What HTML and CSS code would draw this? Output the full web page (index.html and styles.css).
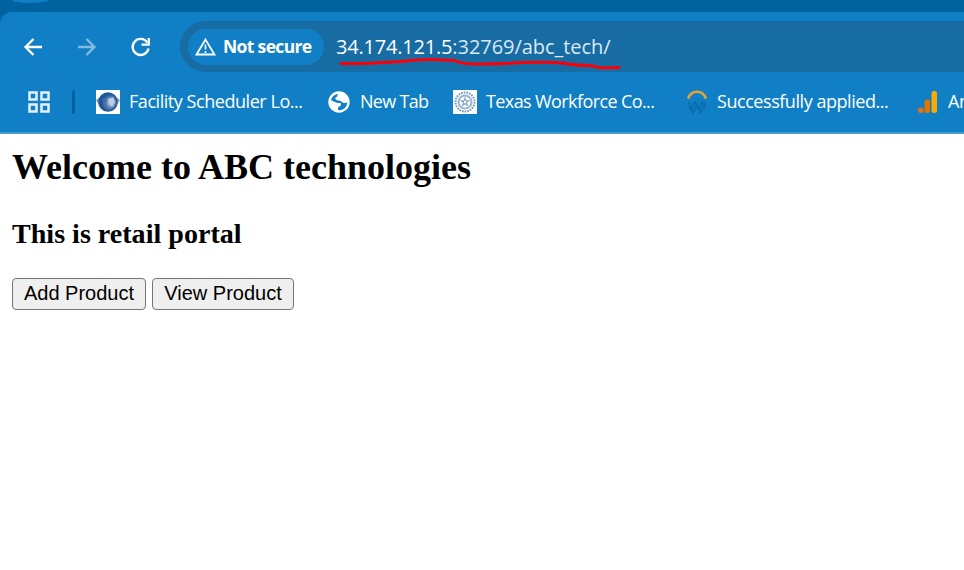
FILE: index.html
```html
<!DOCTYPE html>
<html lang="en">
<head>
<meta charset="utf-8">
<title>ABC technologies</title>
<link rel="stylesheet" href="styles.css">
</head>
<body>
<header class="browser">
  <div class="tabstrip"><span class="tab-foot"></span></div>
  <div class="chrome">
    <div class="toolbar">
      <svg class="nav back" width="24" height="24" viewBox="0 0 24 24"><path d="M21 12H5M12.500 4L4.500 12L12.500 20"/></svg>
      <svg class="nav forward" width="24" height="24" viewBox="0 0 24 24"><path d="M3 12H19.500M11.500 4L19.500 12L11.500 20"/></svg>
      <svg class="nav reload" width="24" height="24" viewBox="0 0 24 24"><path d="M18.300 7.500A8 8 0 1 0 19.500 13.500"/><path d="M19.800 3V9.600H12.500"/></svg>
      <div class="address">
        <div class="chip">
          <svg class="warn" width="22" height="20" viewBox="0 0 22 20"><path d="M10.500 2.600L19.500 17.500H1.500Z"/><path class="mark" d="M10.500 7.500V12.500M10.500 14V16"/></svg>
          <span class="chip-text">Not secure</span>
        </div>
        <span class="url"><span class="host">34.174.121.5</span><span class="path">:32769/abc_tech/</span></span>
        <svg class="underline" width="290" height="16" viewBox="0 0 290 16"><path d="M7 9.500C28 10 43 9 58 8C77 7 85 5 98 5.500C110 6 117 6 121 6.500C126 11 150 10.300 171 9.500C190 8.500 210 7.500 228 9C235 10.500 243 11.500 257 11.500C263 13.500 264 14 285 13.500"/></svg>
      </div>
    </div>
    <nav class="bookmarks">
      <svg class="apps" width="22" height="22" viewBox="0 0 22 22"><path d="M1.500 1.500h7v7h-7zM13.500 1.500h7v7h-7zM1.500 13.500h7v7h-7zM13.500 13.500h7v7h-7z"/></svg>
      <span class="divider"></span>
      <a class="mark-item facility">
        <svg width="24" height="24" viewBox="0 0 24 24"><defs><radialGradient id="g" cx=".65" cy=".55"><stop offset="0" stop-color="#cbd8ec"/><stop offset=".5" stop-color="#6688b9"/><stop offset="1" stop-color="#18579d"/></radialGradient></defs><path fill="#fff" d="M0 0h24v24H0z"/><path fill="#8998a4" d="M0 10l4-3h16l4 3-3 5H3z"/><circle cx="12" cy="12" r="9" fill="url(#g)" stroke="#1d5d9d" stroke-width="1.500"/><path d="M7 9l3 2-2 4 3 1" fill="none" stroke="#4b6c9f" stroke-width="2"/><path d="M12 9l5-2 2 5-3 5-3-4z" fill="#bccce4"/></svg>
        <span class="label">Facility Scheduler Lo...</span></a>
      <a class="mark-item newtab">
        <svg width="22" height="22" viewBox="0 0 22 22"><circle cx="11" cy="11" r="10.700" fill="#fff"/><path fill="#117fc5" d="M11.500 3C9 3 8.500 4.500 10 5.500C7 6 6.500 8 8.500 9C10.500 9.500 12.500 9 13.500 10.500C15 11.500 17 12 19.300 10.500C19.500 16 15 20 10 19V16.500L12.800 14.500V12H9.500L5.500 10.500L3 9C4 5 8 2.300 11.500 3Z"/><path fill="#fff" d="M10 3.200L13.500 2.500L15 4.500L11.500 7.500L13.500 9L19 8.500L19.500 11.500L15.500 12L12.500 9.500L8.500 9L8 6.500L10.500 5Z"/></svg>
        <span class="label">New Tab</span></a>
      <a class="mark-item texas">
        <svg width="24" height="24" viewBox="0 0 24 24"><path fill="#fff" d="M0 0h24v24H0z"/><g fill="none" stroke="#7799c2"><circle cx="12" cy="12" r="9.500" stroke-width="2" stroke-dasharray="1.700 1"/><circle cx="12" cy="12" r="6.500" stroke="#9bb4d2" stroke-width="2"/></g><path fill="#8eaacd" d="M12 6l1.300 4.200h4.200l-3.400 2.600 1.300 4.200-3.400-2.600L8.600 17l1.300-4.200-3.400-2.600h4.200z"/><circle cx="12" cy="12" r="1.200" fill="#fff"/></svg>
        <span class="label">Texas Workforce Co...</span></a>
      <a class="mark-item applied">
        <svg width="20" height="24" viewBox="0 0 20 24"><path d="M1.200 8.500C4 -.6 16 -.6 18.800 8.500" fill="none" stroke="#e9a332" stroke-width="2.600"/><path d="M1.500 12L4.500 19L8 12L12 19L15 12L18.500 18M2 16L6 23L10 15L13.500 23L18 13" fill="none" stroke="#0864a8" stroke-width="1.700" opacity=".7"/></svg>
        <span class="label">Successfully applied...</span></a>
      <a class="mark-item analytics">
        <svg width="20" height="24" viewBox="0 0 20 24"><circle cx="2.800" cy="20.300" r="2.800" fill="#e8710a"/><rect x="6.500" y="9.500" width="5.500" height="13.500" rx="2.500" fill="#e37400"/><rect x="13.500" y="1" width="5.500" height="22" rx="2.500" fill="#f9ab00"/></svg>
        <span class="label">Analytics</span></a>
    </nav>
  </div>
</header>
<main class="page">
  <h2>Welcome to ABC technologies</h2>
  <h3>This is retail portal</h3>
  <div class="actions"><button class="add">Add Product</button><button class="view">View Product</button></div>
</main>
</body>
</html>
```
FILE: styles.css
```css
* { box-sizing: border-box; }
body { margin: 0; background: #fff; overflow: hidden; }
svg { display: block; flex: none; }
.browser { font-family: "Open Sans", "Noto Sans", sans-serif; color: #fff; background: #0063a0; }
.tabstrip { height: 12px; overflow: hidden; padding-left: 12px; }
.tab-foot { display: block; width: 36px; height: 3px; background: #117fc5; border-radius: 0 0 18px 18px / 0 0 3px 3px; }
.chrome { height: 122px; background: #117fc5; border-radius: 12px 0 0 0; border-bottom: 2px solid #4a9bd3; padding-top: 9px; }
.toolbar { display: flex; align-items: center; height: 51px; padding-left: 21px; }
.nav { fill: none; stroke: #fff; stroke-width: 2.3; margin-right: 30px; }
.forward { opacity: .48; }
.reload { margin-right: 27px; }
.address { position: relative; flex: 1; display: flex; align-items: center; height: 51px; padding-left: 8px; border-radius: 26px 0 0 26px; background: #176ca4; }
.chip { display: flex; align-items: center; width: 136px; height: 36px; padding-left: 7px; border-radius: 18px; background: #117fc5; }
.warn { fill: none; stroke: #fff; stroke-width: 1.8; }
.warn .mark { stroke-width: 1.6; }
.chip-text { margin: -2px 0 0 6px; font-size: 17.5px; font-weight: 700; white-space: nowrap; letter-spacing: -.65px; }
.url { margin: -1px 0 0 12px; font-size: 20px; white-space: nowrap; }
.host { letter-spacing: -.2px; }
.path { color: #dce9f1; letter-spacing: -.05px; }
.underline { position: absolute; left: 154px; top: 33px; fill: none; stroke: #fb0007; stroke-width: 3; stroke-linecap: round; }
.bookmarks { display: flex; align-items: center; height: 60px; padding-left: 28px; overflow: hidden; }
.apps { fill: none; stroke: #e5f1f9; stroke-width: 2.5; }
.divider { flex: none; width: 3px; height: 24px; margin: 0 21px 0 22px; border-radius: 2px; background: #0063a0; }
.mark-item { display: flex; flex: none; align-items: center; }
.label { margin: -2px 0 0 9px; font-size: 18px; line-height: 26px; white-space: nowrap; letter-spacing: -.45px; }
.facility { width: 232px; }
.newtab { width: 125px; }
.newtab .label { margin-left: 10px; letter-spacing: -.7px; }
.texas { width: 234px; }
.texas .label { letter-spacing: -.6px; }
.applied { width: 231px; }
.applied .label { margin-left: 10px; }
.analytics .label { margin-left: 10px; }
.page { padding: 13px 12px; color: #000; font-family: "Liberation Serif", serif; }
h2 { margin: 0; font-size: 36px; line-height: 41px; }
h3 { margin: 30px 0 0; font-size: 28.08px; line-height: 32px; }
.actions { display: flex; gap: 6px; margin-top: 28px; }
button { height: 32px; padding: 0 0 2px; border: 1px solid #767676; border-radius: 4px; background: #efefef; color: #000; font: 20px "Liberation Sans", sans-serif; }
.add { width: 134px; }
.view { width: 142px; }
```
